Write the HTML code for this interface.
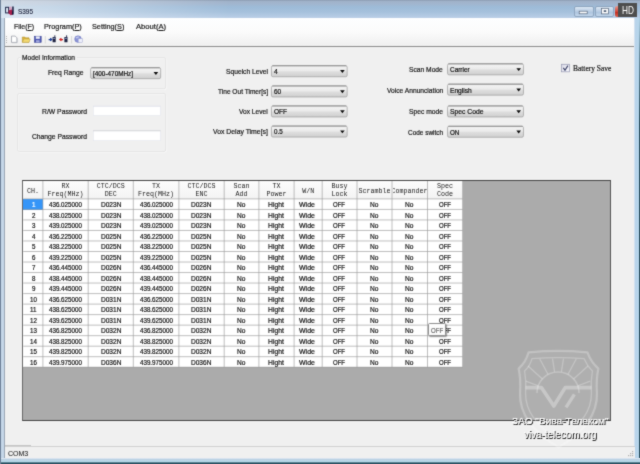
<!DOCTYPE html><html><head><meta charset="utf-8"><title>S395</title><style>
*{box-sizing:border-box;margin:0;padding:0}
html,body{width:640px;height:464px;overflow:hidden;background:#f0f0f0}
body{position:relative;transform:translateZ(0);will-change:transform;filter:url(#bl);font-family:"Liberation Sans",sans-serif;font-size:7px;color:#1a1a1a}
.a{position:absolute}
.t{position:absolute;white-space:nowrap;line-height:1;-webkit-text-stroke:0.2px currentColor}
.combo{position:absolute;height:12px;border:0.7px solid #a9a9a9;border-top-color:#8a8a8a;border-radius:1.6px;background:linear-gradient(#f3f3f3,#ebebeb 45%,#dddddd 55%,#cfcfcf)}
.arr{position:absolute;width:5px;height:3px;background:#0a0a0a;clip-path:polygon(0 0,100% 0,50% 100%)}
.inp{position:absolute;background:#fff;border:0.6px solid #e4e6ee}
.gb{position:absolute;border:0.7px solid #e1e1e1;border-radius:2px;box-shadow:0.6px 0.6px 0 #fbfbfb, inset 0.6px 0.6px 0 #fbfbfb}
.vl{position:absolute;width:0.8px;background:#c2c2c2}
.hl{position:absolute;height:0.8px;background:#c2c2c2}
</style></head><body>
<svg width="0" height="0" style="position:absolute"><filter id="bl" x="0" y="0" width="100%" height="100%" color-interpolation-filters="sRGB"><feConvolveMatrix order="3" kernelMatrix="0.025 0.085 0.025 0.085 0.56 0.085 0.025 0.085 0.025" edgeMode="duplicate" preserveAlpha="true"/></filter></svg>
<div class="a" style="left:0;top:0;width:640px;height:464px;background:#c5d6e8"></div>
<div class="a" style="left:0;top:0;width:640px;height:18px;background:linear-gradient(90deg,rgba(255,255,255,.5) 0,rgba(255,255,255,.42) 50px,rgba(255,255,255,0) 230px),linear-gradient(#8797ad 0,#a0b2c9 1.2px,#a1b6cf 4px,#9dbbd8 7px,#a6c1dc 12px,#b9cee6 17.5px,#c5d8ec 18px)"></div>
<div class="a" style="left:0;top:0;width:0.9px;height:464px;background:#6f8299"></div>
<div class="a" style="left:634px;top:18px;width:6px;height:446px;background:linear-gradient(90deg,#e3ecf6 0,#b9d3ea 1.2px,#b5d7ec 6px)"></div>
<div class="a" style="left:638.9px;top:14px;width:1.1px;height:450px;background:linear-gradient(rgba(45,80,96,0) 0,rgba(45,80,96,.55) 40px,rgba(45,80,96,1) 110px)"></div>
<div class="a" style="left:4.1px;top:18px;width:630px;height:440px;background:#f0f0f0;border-left:1.3px solid #9ba7b5"></div>
<div class="a" style="left:5.4px;top:18px;width:628.7px;height:29px;background:linear-gradient(#fdfeff 0,#fbfbfb 50%,#efefef 100%);border-bottom:1px solid #8e8e8e"></div>
<div class="t" style="left:18.00px;top:8.00px;font-size:7.6px;transform:scaleX(0.845);transform-origin:0 0;color:#1c2540;text-shadow:0 0 2px #fff">S395</div>
<svg class="a" style="left:5px;top:6px" width="10" height="10" viewBox="0 0 10 10"><rect x="0.6" y="1.3" width="3" height="5.6" fill="#e3e9f6" stroke="#1d2748" stroke-width="1"/><path d="M4 1 L6.4 0.4 L7 3.4 L4.6 4Z" fill="#d890b4" opacity="0.8"/><path d="M3.4 4.6 L6.6 3.4 L8 5 L8 8.4 L5.6 9.2 L3.6 7.2Z" fill="#a8204e"/><path d="M7.2 0.6 H8.7 V8.6 L6.8 8.8 L7.2 5Z" fill="#171a3c"/></svg>
<div class="a" style="left:574px;top:5.5px;width:19.5px;height:11px;border:0.7px solid #8fa6c0;border-radius:2px;background:linear-gradient(#dbe7f3,#b7cbe2 50%,#a9c1dc 51%,#c3d6ea)"></div>
<div class="a" style="left:594.5px;top:5.5px;width:19.5px;height:11px;border:0.7px solid #8fa6c0;border-radius:2px;background:linear-gradient(#dbe7f3,#b7cbe2 50%,#a9c1dc 51%,#c3d6ea)"></div>
<svg class="a" style="left:570px;top:0" width="50" height="18" viewBox="570 0 50 18"><rect x="579.2" y="11.2" width="8" height="2.6" fill="#fff" stroke="#55657c" stroke-width="0.7"/><rect x="601.6" y="8.3" width="6.8" height="5.6" fill="#fff" stroke="#55657c" stroke-width="0.7"/><rect x="603.7" y="10.2" width="2.6" height="1.8" fill="#55657c"/></svg>
<div class="a" style="left:614.5px;top:5.5px;width:6px;height:11px;background:linear-gradient(#e89a8f,#d3473a 50%,#c02a1c 51%,#d8604f);border-radius:2px 0 0 2px"></div>
<div class="a" style="left:617.5px;top:3px;width:19.5px;height:14px;background:#4d4d4d"></div>
<div class="t" style="left:622.00px;top:6.00px;font-size:10.4px;transform:scaleX(0.792);transform-origin:0 0;color:#fff;-webkit-text-stroke:0">HD</div>
<div class="t" style="left:13.70px;top:23.00px;font-size:7.6px;transform:scaleX(0.913);transform-origin:0 0;color:#1a1a1a">File(<u>F</u>)</div>
<div class="t" style="left:44.40px;top:23.00px;font-size:7.6px;transform:scaleX(0.960);transform-origin:0 0;color:#1a1a1a">Program(<u>P</u>)</div>
<div class="t" style="left:92.30px;top:23.00px;font-size:7.6px;transform:scaleX(0.956);transform-origin:0 0;color:#1a1a1a">Setting(<u>S</u>)</div>
<div class="t" style="left:135.90px;top:23.00px;font-size:7.6px;transform:scaleX(1.004);transform-origin:0 0;color:#1a1a1a">About(<u>A</u>)</div>
<div class="a" style="left:6.2px;top:35.5px;width:1px;height:8.5px;background:repeating-linear-gradient(#b5b5b5 0,#b5b5b5 1px,transparent 1px,transparent 2px)"></div>
<svg class="a" style="left:10px;top:34px" width="80" height="12" viewBox="0 0 80 12"><path d="M1.5 2.1 H5.2 L6.9 3.8 V8.4 H1.5Z" fill="#fff" stroke="#7d838e" stroke-width="0.6"/><path d="M7.3 4.2 V8.8 H2" stroke="#b9bcc4" stroke-width="0.5" fill="none"/><path d="M12.3 3 H14.8 L15.6 3.8 H19 V8.3 H12.3Z" fill="#dcb43c" stroke="#a88a2c" stroke-width="0.5"/><path d="M12.4 8.3 L13.8 5 H20.2 L19 8.3Z" fill="#f3da72" stroke="#b39632" stroke-width="0.4"/><rect x="24.4" y="2.2" width="6.8" height="6.2" fill="#4c56b2" stroke="#343c8c" stroke-width="0.5"/><rect x="25.8" y="2.4" width="4" height="2.4" fill="#eef0fa"/><rect x="26" y="6.2" width="3.6" height="2.2" fill="#a3aade"/><path d="M35.3 2 V9.4" stroke="#c6c6c6" stroke-width="0.6"/><path d="M38.6 5.6 H41.6 M40.2 4.3 L41.8 5.6 L40.2 6.9" stroke="#1c3e9a" stroke-width="1.1" fill="none"/><rect x="42.6" y="3" width="3.1" height="5.3" rx="0.4" fill="#1c2140"/><rect x="44.4" y="1.3" width="0.9" height="2" fill="#1c2140"/><rect x="43.2" y="3.8" width="1.9" height="1.2" fill="#7d86b4"/><path d="M50 5.6 H53 M51.4 4.3 L49.8 5.6 L51.4 6.9" stroke="#d42424" stroke-width="1.1" fill="none"/><rect x="54.4" y="3" width="3.1" height="5.3" rx="0.4" fill="#1c2140"/><rect x="56.2" y="1.3" width="0.9" height="2" fill="#1c2140"/><rect x="55" y="3.8" width="1.9" height="1.2" fill="#7d86b4"/><path d="M61.6 2 V9.4" stroke="#c6c6c6" stroke-width="0.6"/><circle cx="68" cy="5.1" r="3.3" fill="#8a93d6" stroke="#6670b8" stroke-width="0.5"/><path d="M65.4 3.6 Q67 2.2 69.4 2.6 Q68.4 4.4 66.6 4.6Z" fill="#c5cbf0"/><rect x="68.2" y="4.6" width="4.2" height="3.9" fill="#eceefa" stroke="#8f96c8" stroke-width="0.4"/></svg>
<svg width="0" height="0" style="position:absolute"><defs><linearGradient id="cbg" x1="0" y1="0" x2="0" y2="1"><stop offset="0" stop-color="#f4f4f4"/><stop offset="0.45" stop-color="#ebebeb"/><stop offset="0.55" stop-color="#dedede"/><stop offset="1" stop-color="#cfcfcf"/></linearGradient></defs></svg>
<svg class="a" style="left:15px;top:55px" width="153" height="37" viewBox="15 55 153 37"><rect x="18.40" y="58.30" width="147.90" height="31.20" rx="1.6" fill="none" stroke="#fcfcfc" stroke-width="0.7"/><rect x="17.70" y="57.60" width="147.90" height="31.20" rx="1.6" fill="none" stroke="#dedede" stroke-width="0.7"/></svg>
<div class="a" style="left:20.5px;top:55px;width:56px;height:6px;background:#f0f0f0"></div>
<div class="t" style="left:21.95px;top:55.00px;font-size:6.8px;transform:scaleX(0.975);transform-origin:0 0;">Model Information</div>
<div class="t" style="left:48.25px;top:70.00px;font-size:6.8px;transform:scaleX(0.990);transform-origin:0 0;">Freq Range</div>
<svg class="a" style="left:88px;top:65px" width="76" height="18" viewBox="88 65 76 18"><rect x="90.65" y="67.75" width="70.00" height="10.90" rx="1.5" fill="url(#cbg)" stroke="#a0a0a0" stroke-width="0.75"/><path d="M91.50 67.75 H159.80" stroke="#7e7e7e" stroke-width="0.75"/><path d="M153.55 72.10 h4.7 l-2.35 2.9z" fill="#0a0a0a"/></svg><div class="t" style="left:92.70px;top:71.00px;font-size:6.8px;transform:scaleX(0.939);transform-origin:0 0;color:#111">[400-470MHz]</div>
<svg class="a" style="left:15px;top:91px" width="153" height="64" viewBox="15 91 153 64"><rect x="18.40" y="94.20" width="147.90" height="58.00" rx="1.6" fill="none" stroke="#fcfcfc" stroke-width="0.7"/><rect x="17.70" y="93.50" width="147.90" height="58.00" rx="1.6" fill="none" stroke="#dedede" stroke-width="0.7"/></svg>
<div class="t" style="left:41.80px;top:109.00px;font-size:6.8px;transform:scaleX(1.001);transform-origin:0 0;">R/W Password</div>
<svg class="a" style="left:91px;top:103px" width="73" height="15" viewBox="91 103 73 15"><rect x="93.40" y="106.20" width="66.90" height="9.20" fill="#fff" stroke="#e4e6ee" stroke-width="0.6"/><path d="M93.10 106.20 H160.60" stroke="#dfe1ea" stroke-width="0.6"/></svg>
<div class="t" style="left:31.70px;top:134.00px;font-size:6.8px;transform:scaleX(0.992);transform-origin:0 0;">Change Password</div>
<svg class="a" style="left:91px;top:128px" width="73" height="16" viewBox="91 128 73 16"><rect x="93.40" y="130.80" width="66.90" height="9.90" fill="#fff" stroke="#e4e6ee" stroke-width="0.6"/><path d="M93.10 130.80 H160.60" stroke="#c4c4c8" stroke-width="0.6"/></svg>
<div class="t" style="left:225.80px;top:69.00px;font-size:6.8px;transform:scaleX(0.985);transform-origin:0 0;">Squelch Level</div>
<svg class="a" style="left:269px;top:63px" width="82" height="18" viewBox="269 63 82 18"><rect x="271.45" y="65.75" width="75.70" height="11.00" rx="1.5" fill="url(#cbg)" stroke="#a0a0a0" stroke-width="0.75"/><path d="M272.30 65.75 H346.30" stroke="#7e7e7e" stroke-width="0.75"/><path d="M340.05 70.10 h4.7 l-2.35 2.9z" fill="#0a0a0a"/></svg><div class="t" style="left:273.50px;top:69.00px;font-size:6.8px;transform:scaleX(0.978);transform-origin:0 0;color:#111">4</div>
<div class="t" style="left:217.70px;top:89.00px;font-size:6.8px;transform:scaleX(0.967);transform-origin:0 0;">Tine Out Timer[s]</div>
<svg class="a" style="left:269px;top:83px" width="82" height="18" viewBox="269 83 82 18"><rect x="271.45" y="85.95" width="75.70" height="11.00" rx="1.5" fill="url(#cbg)" stroke="#a0a0a0" stroke-width="0.75"/><path d="M272.30 85.95 H346.30" stroke="#7e7e7e" stroke-width="0.75"/><path d="M340.05 90.30 h4.7 l-2.35 2.9z" fill="#0a0a0a"/></svg><div class="t" style="left:273.50px;top:89.00px;font-size:6.8px;transform:scaleX(0.952);transform-origin:0 0;color:#111">60</div>
<div class="t" style="left:239.20px;top:109.00px;font-size:6.8px;transform:scaleX(0.973);transform-origin:0 0;">Vox Level</div>
<svg class="a" style="left:269px;top:103px" width="82" height="18" viewBox="269 103 82 18"><rect x="271.45" y="105.95" width="75.70" height="11.00" rx="1.5" fill="url(#cbg)" stroke="#a0a0a0" stroke-width="0.75"/><path d="M272.30 105.95 H346.30" stroke="#7e7e7e" stroke-width="0.75"/><path d="M340.05 110.30 h4.7 l-2.35 2.9z" fill="#0a0a0a"/></svg><div class="t" style="left:273.50px;top:109.00px;font-size:6.8px;transform:scaleX(0.956);transform-origin:0 0;color:#111">OFF</div>
<div class="t" style="left:213.00px;top:129.00px;font-size:6.8px;transform:scaleX(1.009);transform-origin:0 0;">Vox Delay Time[s]</div>
<svg class="a" style="left:269px;top:123px" width="82" height="18" viewBox="269 123 82 18"><rect x="271.45" y="126.05" width="75.70" height="11.00" rx="1.5" fill="url(#cbg)" stroke="#a0a0a0" stroke-width="0.75"/><path d="M272.30 126.05 H346.30" stroke="#7e7e7e" stroke-width="0.75"/><path d="M340.05 130.40 h4.7 l-2.35 2.9z" fill="#0a0a0a"/></svg><div class="t" style="left:273.50px;top:129.00px;font-size:6.8px;transform:scaleX(0.920);transform-origin:0 0;color:#111">0.5</div>
<div class="t" style="left:409.10px;top:67.00px;font-size:6.8px;transform:scaleX(0.983);transform-origin:0 0;">Scan Mode</div>
<svg class="a" style="left:445px;top:61px" width="82" height="18" viewBox="445 61 82 18"><rect x="447.55" y="63.85" width="75.90" height="11.00" rx="1.5" fill="url(#cbg)" stroke="#a0a0a0" stroke-width="0.75"/><path d="M448.40 63.85 H522.60" stroke="#7e7e7e" stroke-width="0.75"/><path d="M516.35 68.20 h4.7 l-2.35 2.9z" fill="#0a0a0a"/></svg><div class="t" style="left:449.60px;top:67.00px;font-size:6.8px;transform:scaleX(0.943);transform-origin:0 0;color:#111">Carrier</div>
<div class="t" style="left:386.60px;top:88.00px;font-size:6.8px;transform:scaleX(0.980);transform-origin:0 0;">Voice Annunciation</div>
<svg class="a" style="left:445px;top:81px" width="82" height="18" viewBox="445 81 82 18"><rect x="447.55" y="84.15" width="75.90" height="11.00" rx="1.5" fill="url(#cbg)" stroke="#a0a0a0" stroke-width="0.75"/><path d="M448.40 84.15 H522.60" stroke="#7e7e7e" stroke-width="0.75"/><path d="M516.35 88.50 h4.7 l-2.35 2.9z" fill="#0a0a0a"/></svg><div class="t" style="left:449.60px;top:88.00px;font-size:6.8px;transform:scaleX(0.977);transform-origin:0 0;color:#111">English</div>
<div class="t" style="left:408.80px;top:109.00px;font-size:6.8px;transform:scaleX(0.991);transform-origin:0 0;">Spec mode</div>
<svg class="a" style="left:445px;top:103px" width="82" height="18" viewBox="445 103 82 18"><rect x="447.55" y="105.95" width="75.90" height="11.00" rx="1.5" fill="url(#cbg)" stroke="#a0a0a0" stroke-width="0.75"/><path d="M448.40 105.95 H522.60" stroke="#7e7e7e" stroke-width="0.75"/><path d="M516.35 110.30 h4.7 l-2.35 2.9z" fill="#0a0a0a"/></svg><div class="t" style="left:449.60px;top:109.00px;font-size:6.8px;transform:scaleX(0.996);transform-origin:0 0;color:#111">Spec Code</div>
<div class="t" style="left:407.80px;top:130.00px;font-size:6.8px;transform:scaleX(0.948);transform-origin:0 0;">Code switch</div>
<svg class="a" style="left:445px;top:123px" width="82" height="18" viewBox="445 123 82 18"><rect x="447.55" y="126.25" width="75.90" height="11.00" rx="1.5" fill="url(#cbg)" stroke="#a0a0a0" stroke-width="0.75"/><path d="M448.40 126.25 H522.60" stroke="#7e7e7e" stroke-width="0.75"/><path d="M516.35 130.60 h4.7 l-2.35 2.9z" fill="#0a0a0a"/></svg><div class="t" style="left:449.60px;top:130.00px;font-size:6.8px;transform:scaleX(0.922);transform-origin:0 0;color:#111">ON</div>
<svg class="a" style="left:558px;top:61px" width="16" height="16" viewBox="558 61 16 16"><defs><linearGradient id="cg" x1="0" y1="0" x2="1" y2="1"><stop offset="0" stop-color="#d9d9e6"/><stop offset="1" stop-color="#fbfbff"/></linearGradient></defs><rect x="561.6" y="64.3" width="7.8" height="7.5" fill="url(#cg)" stroke="#9a9db6" stroke-width="0.75"/><path d="M563.3 67.9 L565 70.2 L567.9 65.6" stroke="#3d4468" stroke-width="1.15" fill="none"/></svg>
<div class="t" style="left:573.00px;top:65.00px;font-size:7.5px;font-family:'Liberation Serif',serif;transform:scaleX(0.993);transform-origin:0 0;">Battery Save</div>
<div class="a" style="left:22.0px;top:179.8px;width:589.1px;height:241.0px;background:#ababab;border:1.15px solid #454545;border-left-color:#686868;border-right-color:#555"></div>
<div class="a" style="left:23.3px;top:181px;width:439.5px;height:186.32px;background:#fff"></div>
<div class="a" style="left:23.3px;top:181px;width:439.5px;height:18.0px;background:linear-gradient(#fcfcfc,#f3f3f3)"></div>
<div class="a" style="left:23.3px;top:199.0px;width:19.900000000000002px;height:10.52px;background:#3595f8"></div>
<svg class="a" style="left:0;top:0" width="640" height="464" viewBox="0 0 640 464"><g stroke="#9c9c9c" stroke-width="0.66" fill="none"><path d="M42.90 181.00 V367.32 M88.20 181.00 V367.32 M133.30 181.00 V367.32 M178.90 181.00 V367.32 M224.20 181.00 V367.32 M258.90 181.00 V367.32 M294.10 181.00 V367.32 M322.20 181.00 V367.32 M357.00 181.00 V367.32 M392.00 181.00 V367.32 M427.50 181.00 V367.32 M462.50 181.00 V367.32 M23.30 198.90 H462.80 M23.30 209.42 H462.80 M23.30 219.94 H462.80 M23.30 230.46 H462.80 M23.30 240.98 H462.80 M23.30 251.50 H462.80 M23.30 262.02 H462.80 M23.30 272.54 H462.80 M23.30 283.06 H462.80 M23.30 293.58 H462.80 M23.30 304.10 H462.80 M23.30 314.62 H462.80 M23.30 325.14 H462.80 M23.30 335.66 H462.80 M23.30 346.18 H462.80 M23.30 356.70 H462.80 M23.30 367.22 H462.80"/></g></svg>
<div class="t" style="left:26.95px;top:188.00px;font-size:6.666666666666667px;font-family:'Liberation Mono',monospace;transform:scaleX(1.000);transform-origin:0 0;color:#202020;-webkit-text-stroke:0">CH.</div>
<div class="t" style="left:61.55px;top:183.00px;font-size:6.666666666666667px;font-family:'Liberation Mono',monospace;transform:scaleX(1.000);transform-origin:0 0;color:#202020;-webkit-text-stroke:0">RX</div>
<div class="t" style="left:47.55px;top:191.00px;font-size:6.666666666666667px;font-family:'Liberation Mono',monospace;transform:scaleX(1.000);transform-origin:0 0;color:#202020;-webkit-text-stroke:0">Freq(MHz)</div>
<div class="t" style="left:96.75px;top:183.00px;font-size:6.666666666666667px;font-family:'Liberation Mono',monospace;transform:scaleX(1.000);transform-origin:0 0;color:#202020;-webkit-text-stroke:0">CTC/DCS</div>
<div class="t" style="left:104.75px;top:191.00px;font-size:6.666666666666667px;font-family:'Liberation Mono',monospace;transform:scaleX(1.000);transform-origin:0 0;color:#202020;-webkit-text-stroke:0">DEC</div>
<div class="t" style="left:152.10px;top:183.00px;font-size:6.666666666666667px;font-family:'Liberation Mono',monospace;transform:scaleX(1.000);transform-origin:0 0;color:#202020;-webkit-text-stroke:0">TX</div>
<div class="t" style="left:138.10px;top:191.00px;font-size:6.666666666666667px;font-family:'Liberation Mono',monospace;transform:scaleX(1.000);transform-origin:0 0;color:#202020;-webkit-text-stroke:0">Freq(MHz)</div>
<div class="t" style="left:187.55px;top:183.00px;font-size:6.666666666666667px;font-family:'Liberation Mono',monospace;transform:scaleX(1.000);transform-origin:0 0;color:#202020;-webkit-text-stroke:0">CTC/DCS</div>
<div class="t" style="left:195.55px;top:191.00px;font-size:6.666666666666667px;font-family:'Liberation Mono',monospace;transform:scaleX(1.000);transform-origin:0 0;color:#202020;-webkit-text-stroke:0">ENC</div>
<div class="t" style="left:233.55px;top:183.00px;font-size:6.666666666666667px;font-family:'Liberation Mono',monospace;transform:scaleX(1.000);transform-origin:0 0;color:#202020;-webkit-text-stroke:0">Scan</div>
<div class="t" style="left:235.55px;top:191.00px;font-size:6.666666666666667px;font-family:'Liberation Mono',monospace;transform:scaleX(1.000);transform-origin:0 0;color:#202020;-webkit-text-stroke:0">Add</div>
<div class="t" style="left:272.50px;top:183.00px;font-size:6.666666666666667px;font-family:'Liberation Mono',monospace;transform:scaleX(1.000);transform-origin:0 0;color:#202020;-webkit-text-stroke:0">TX</div>
<div class="t" style="left:266.50px;top:191.00px;font-size:6.666666666666667px;font-family:'Liberation Mono',monospace;transform:scaleX(1.000);transform-origin:0 0;color:#202020;-webkit-text-stroke:0">Power</div>
<div class="t" style="left:302.15px;top:188.00px;font-size:6.666666666666667px;font-family:'Liberation Mono',monospace;transform:scaleX(1.000);transform-origin:0 0;color:#202020;-webkit-text-stroke:0">W/N</div>
<div class="t" style="left:331.60px;top:183.00px;font-size:6.666666666666667px;font-family:'Liberation Mono',monospace;transform:scaleX(1.000);transform-origin:0 0;color:#202020;-webkit-text-stroke:0">Busy</div>
<div class="t" style="left:331.60px;top:191.00px;font-size:6.666666666666667px;font-family:'Liberation Mono',monospace;transform:scaleX(1.000);transform-origin:0 0;color:#202020;-webkit-text-stroke:0">Lock</div>
<div class="t" style="left:358.50px;top:188.00px;font-size:6.666666666666667px;font-family:'Liberation Mono',monospace;transform:scaleX(1.000);transform-origin:0 0;color:#202020;-webkit-text-stroke:0">Scramble</div>
<div class="a" style="left:392.8px;top:181px;width:34.5px;height:17.0px;overflow:hidden">
<div class="t" style="left:-1.30px;top:6.99px;font-size:6.667px;font-family:'Liberation Mono',monospace;color:#202020;-webkit-text-stroke:0">Compander</div></div>
<div class="t" style="left:437.00px;top:183.00px;font-size:6.666666666666667px;font-family:'Liberation Mono',monospace;transform:scaleX(1.000);transform-origin:0 0;color:#202020;-webkit-text-stroke:0">Spec</div>
<div class="t" style="left:437.00px;top:191.00px;font-size:6.666666666666667px;font-family:'Liberation Mono',monospace;transform:scaleX(1.000);transform-origin:0 0;color:#202020;-webkit-text-stroke:0">Code</div>
<div class="t" style="left:31.53px;top:202.00px;font-size:6.6px;transform:scaleX(0.939);transform-origin:0 0;color:#fff">1</div>
<div class="t" style="left:49.10px;top:202.00px;font-size:6.6px;transform:scaleX(0.943);transform-origin:0 0;color:#141414">436.025000</div>
<div class="t" style="left:100.55px;top:202.00px;font-size:6.6px;transform:scaleX(0.993);transform-origin:0 0;color:#141414">D023N</div>
<div class="t" style="left:139.65px;top:202.00px;font-size:6.6px;transform:scaleX(0.943);transform-origin:0 0;color:#141414">436.025000</div>
<div class="t" style="left:191.35px;top:202.00px;font-size:6.6px;transform:scaleX(0.993);transform-origin:0 0;color:#141414">D023N</div>
<div class="t" style="left:236.95px;top:202.00px;font-size:6.6px;transform:scaleX(0.996);transform-origin:0 0;color:#141414">No</div>
<div class="t" style="left:268.40px;top:202.00px;font-size:6.6px;transform:scaleX(1.025);transform-origin:0 0;color:#141414">Hight</div>
<div class="t" style="left:299.20px;top:202.00px;font-size:6.6px;transform:scaleX(1.057);transform-origin:0 0;color:#141414">Wide</div>
<div class="t" style="left:332.90px;top:202.00px;font-size:6.6px;transform:scaleX(0.909);transform-origin:0 0;color:#141414">OFF</div>
<div class="t" style="left:370.00px;top:202.00px;font-size:6.6px;transform:scaleX(0.996);transform-origin:0 0;color:#141414">No</div>
<div class="t" style="left:405.25px;top:202.00px;font-size:6.6px;transform:scaleX(0.996);transform-origin:0 0;color:#141414">No</div>
<div class="t" style="left:438.70px;top:202.00px;font-size:6.6px;transform:scaleX(0.909);transform-origin:0 0;color:#141414">OFF</div>
<div class="t" style="left:31.53px;top:213.00px;font-size:6.6px;transform:scaleX(0.939);transform-origin:0 0;color:#141414">2</div>
<div class="t" style="left:49.10px;top:213.00px;font-size:6.6px;transform:scaleX(0.943);transform-origin:0 0;color:#141414">438.025000</div>
<div class="t" style="left:100.55px;top:213.00px;font-size:6.6px;transform:scaleX(0.993);transform-origin:0 0;color:#141414">D023N</div>
<div class="t" style="left:139.65px;top:213.00px;font-size:6.6px;transform:scaleX(0.943);transform-origin:0 0;color:#141414">438.025000</div>
<div class="t" style="left:191.35px;top:213.00px;font-size:6.6px;transform:scaleX(0.993);transform-origin:0 0;color:#141414">D023N</div>
<div class="t" style="left:236.95px;top:213.00px;font-size:6.6px;transform:scaleX(0.996);transform-origin:0 0;color:#141414">No</div>
<div class="t" style="left:268.40px;top:213.00px;font-size:6.6px;transform:scaleX(1.025);transform-origin:0 0;color:#141414">Hight</div>
<div class="t" style="left:299.20px;top:213.00px;font-size:6.6px;transform:scaleX(1.057);transform-origin:0 0;color:#141414">Wide</div>
<div class="t" style="left:332.90px;top:213.00px;font-size:6.6px;transform:scaleX(0.909);transform-origin:0 0;color:#141414">OFF</div>
<div class="t" style="left:370.00px;top:213.00px;font-size:6.6px;transform:scaleX(0.996);transform-origin:0 0;color:#141414">No</div>
<div class="t" style="left:405.25px;top:213.00px;font-size:6.6px;transform:scaleX(0.996);transform-origin:0 0;color:#141414">No</div>
<div class="t" style="left:438.70px;top:213.00px;font-size:6.6px;transform:scaleX(0.909);transform-origin:0 0;color:#141414">OFF</div>
<div class="t" style="left:31.53px;top:223.00px;font-size:6.6px;transform:scaleX(0.939);transform-origin:0 0;color:#141414">3</div>
<div class="t" style="left:49.10px;top:223.00px;font-size:6.6px;transform:scaleX(0.943);transform-origin:0 0;color:#141414">439.025000</div>
<div class="t" style="left:100.55px;top:223.00px;font-size:6.6px;transform:scaleX(0.993);transform-origin:0 0;color:#141414">D023N</div>
<div class="t" style="left:139.65px;top:223.00px;font-size:6.6px;transform:scaleX(0.943);transform-origin:0 0;color:#141414">439.025000</div>
<div class="t" style="left:191.35px;top:223.00px;font-size:6.6px;transform:scaleX(0.993);transform-origin:0 0;color:#141414">D023N</div>
<div class="t" style="left:236.95px;top:223.00px;font-size:6.6px;transform:scaleX(0.996);transform-origin:0 0;color:#141414">No</div>
<div class="t" style="left:268.40px;top:223.00px;font-size:6.6px;transform:scaleX(1.025);transform-origin:0 0;color:#141414">Hight</div>
<div class="t" style="left:299.20px;top:223.00px;font-size:6.6px;transform:scaleX(1.057);transform-origin:0 0;color:#141414">Wide</div>
<div class="t" style="left:332.90px;top:223.00px;font-size:6.6px;transform:scaleX(0.909);transform-origin:0 0;color:#141414">OFF</div>
<div class="t" style="left:370.00px;top:223.00px;font-size:6.6px;transform:scaleX(0.996);transform-origin:0 0;color:#141414">No</div>
<div class="t" style="left:405.25px;top:223.00px;font-size:6.6px;transform:scaleX(0.996);transform-origin:0 0;color:#141414">No</div>
<div class="t" style="left:438.70px;top:223.00px;font-size:6.6px;transform:scaleX(0.909);transform-origin:0 0;color:#141414">OFF</div>
<div class="t" style="left:31.53px;top:234.00px;font-size:6.6px;transform:scaleX(0.939);transform-origin:0 0;color:#141414">4</div>
<div class="t" style="left:49.10px;top:234.00px;font-size:6.6px;transform:scaleX(0.943);transform-origin:0 0;color:#141414">436.225000</div>
<div class="t" style="left:100.55px;top:234.00px;font-size:6.6px;transform:scaleX(0.993);transform-origin:0 0;color:#141414">D025N</div>
<div class="t" style="left:139.65px;top:234.00px;font-size:6.6px;transform:scaleX(0.943);transform-origin:0 0;color:#141414">436.225000</div>
<div class="t" style="left:191.35px;top:234.00px;font-size:6.6px;transform:scaleX(0.993);transform-origin:0 0;color:#141414">D025N</div>
<div class="t" style="left:236.95px;top:234.00px;font-size:6.6px;transform:scaleX(0.996);transform-origin:0 0;color:#141414">No</div>
<div class="t" style="left:268.40px;top:234.00px;font-size:6.6px;transform:scaleX(1.025);transform-origin:0 0;color:#141414">Hight</div>
<div class="t" style="left:299.20px;top:234.00px;font-size:6.6px;transform:scaleX(1.057);transform-origin:0 0;color:#141414">Wide</div>
<div class="t" style="left:332.90px;top:234.00px;font-size:6.6px;transform:scaleX(0.909);transform-origin:0 0;color:#141414">OFF</div>
<div class="t" style="left:370.00px;top:234.00px;font-size:6.6px;transform:scaleX(0.996);transform-origin:0 0;color:#141414">No</div>
<div class="t" style="left:405.25px;top:234.00px;font-size:6.6px;transform:scaleX(0.996);transform-origin:0 0;color:#141414">No</div>
<div class="t" style="left:438.70px;top:234.00px;font-size:6.6px;transform:scaleX(0.909);transform-origin:0 0;color:#141414">OFF</div>
<div class="t" style="left:31.53px;top:244.00px;font-size:6.6px;transform:scaleX(0.939);transform-origin:0 0;color:#141414">5</div>
<div class="t" style="left:49.10px;top:244.00px;font-size:6.6px;transform:scaleX(0.943);transform-origin:0 0;color:#141414">438.225000</div>
<div class="t" style="left:100.55px;top:244.00px;font-size:6.6px;transform:scaleX(0.993);transform-origin:0 0;color:#141414">D025N</div>
<div class="t" style="left:139.65px;top:244.00px;font-size:6.6px;transform:scaleX(0.943);transform-origin:0 0;color:#141414">438.225000</div>
<div class="t" style="left:191.35px;top:244.00px;font-size:6.6px;transform:scaleX(0.993);transform-origin:0 0;color:#141414">D025N</div>
<div class="t" style="left:236.95px;top:244.00px;font-size:6.6px;transform:scaleX(0.996);transform-origin:0 0;color:#141414">No</div>
<div class="t" style="left:268.40px;top:244.00px;font-size:6.6px;transform:scaleX(1.025);transform-origin:0 0;color:#141414">Hight</div>
<div class="t" style="left:299.20px;top:244.00px;font-size:6.6px;transform:scaleX(1.057);transform-origin:0 0;color:#141414">Wide</div>
<div class="t" style="left:332.90px;top:244.00px;font-size:6.6px;transform:scaleX(0.909);transform-origin:0 0;color:#141414">OFF</div>
<div class="t" style="left:370.00px;top:244.00px;font-size:6.6px;transform:scaleX(0.996);transform-origin:0 0;color:#141414">No</div>
<div class="t" style="left:405.25px;top:244.00px;font-size:6.6px;transform:scaleX(0.996);transform-origin:0 0;color:#141414">No</div>
<div class="t" style="left:438.70px;top:244.00px;font-size:6.6px;transform:scaleX(0.909);transform-origin:0 0;color:#141414">OFF</div>
<div class="t" style="left:31.53px;top:255.00px;font-size:6.6px;transform:scaleX(0.939);transform-origin:0 0;color:#141414">6</div>
<div class="t" style="left:49.10px;top:255.00px;font-size:6.6px;transform:scaleX(0.943);transform-origin:0 0;color:#141414">439.225000</div>
<div class="t" style="left:100.55px;top:255.00px;font-size:6.6px;transform:scaleX(0.993);transform-origin:0 0;color:#141414">D025N</div>
<div class="t" style="left:139.65px;top:255.00px;font-size:6.6px;transform:scaleX(0.943);transform-origin:0 0;color:#141414">439.225000</div>
<div class="t" style="left:191.35px;top:255.00px;font-size:6.6px;transform:scaleX(0.993);transform-origin:0 0;color:#141414">D025N</div>
<div class="t" style="left:236.95px;top:255.00px;font-size:6.6px;transform:scaleX(0.996);transform-origin:0 0;color:#141414">No</div>
<div class="t" style="left:268.40px;top:255.00px;font-size:6.6px;transform:scaleX(1.025);transform-origin:0 0;color:#141414">Hight</div>
<div class="t" style="left:299.20px;top:255.00px;font-size:6.6px;transform:scaleX(1.057);transform-origin:0 0;color:#141414">Wide</div>
<div class="t" style="left:332.90px;top:255.00px;font-size:6.6px;transform:scaleX(0.909);transform-origin:0 0;color:#141414">OFF</div>
<div class="t" style="left:370.00px;top:255.00px;font-size:6.6px;transform:scaleX(0.996);transform-origin:0 0;color:#141414">No</div>
<div class="t" style="left:405.25px;top:255.00px;font-size:6.6px;transform:scaleX(0.996);transform-origin:0 0;color:#141414">No</div>
<div class="t" style="left:438.70px;top:255.00px;font-size:6.6px;transform:scaleX(0.909);transform-origin:0 0;color:#141414">OFF</div>
<div class="t" style="left:31.53px;top:265.00px;font-size:6.6px;transform:scaleX(0.939);transform-origin:0 0;color:#141414">7</div>
<div class="t" style="left:49.10px;top:265.00px;font-size:6.6px;transform:scaleX(0.943);transform-origin:0 0;color:#141414">436.445000</div>
<div class="t" style="left:100.55px;top:265.00px;font-size:6.6px;transform:scaleX(0.993);transform-origin:0 0;color:#141414">D026N</div>
<div class="t" style="left:139.65px;top:265.00px;font-size:6.6px;transform:scaleX(0.943);transform-origin:0 0;color:#141414">436.445000</div>
<div class="t" style="left:191.35px;top:265.00px;font-size:6.6px;transform:scaleX(0.993);transform-origin:0 0;color:#141414">D026N</div>
<div class="t" style="left:236.95px;top:265.00px;font-size:6.6px;transform:scaleX(0.996);transform-origin:0 0;color:#141414">No</div>
<div class="t" style="left:268.40px;top:265.00px;font-size:6.6px;transform:scaleX(1.025);transform-origin:0 0;color:#141414">Hight</div>
<div class="t" style="left:299.20px;top:265.00px;font-size:6.6px;transform:scaleX(1.057);transform-origin:0 0;color:#141414">Wide</div>
<div class="t" style="left:332.90px;top:265.00px;font-size:6.6px;transform:scaleX(0.909);transform-origin:0 0;color:#141414">OFF</div>
<div class="t" style="left:370.00px;top:265.00px;font-size:6.6px;transform:scaleX(0.996);transform-origin:0 0;color:#141414">No</div>
<div class="t" style="left:405.25px;top:265.00px;font-size:6.6px;transform:scaleX(0.996);transform-origin:0 0;color:#141414">No</div>
<div class="t" style="left:438.70px;top:265.00px;font-size:6.6px;transform:scaleX(0.909);transform-origin:0 0;color:#141414">OFF</div>
<div class="t" style="left:31.53px;top:276.00px;font-size:6.6px;transform:scaleX(0.939);transform-origin:0 0;color:#141414">8</div>
<div class="t" style="left:49.10px;top:276.00px;font-size:6.6px;transform:scaleX(0.943);transform-origin:0 0;color:#141414">438.445000</div>
<div class="t" style="left:100.55px;top:276.00px;font-size:6.6px;transform:scaleX(0.993);transform-origin:0 0;color:#141414">D026N</div>
<div class="t" style="left:139.65px;top:276.00px;font-size:6.6px;transform:scaleX(0.943);transform-origin:0 0;color:#141414">438.445000</div>
<div class="t" style="left:191.35px;top:276.00px;font-size:6.6px;transform:scaleX(0.993);transform-origin:0 0;color:#141414">D026N</div>
<div class="t" style="left:236.95px;top:276.00px;font-size:6.6px;transform:scaleX(0.996);transform-origin:0 0;color:#141414">No</div>
<div class="t" style="left:268.40px;top:276.00px;font-size:6.6px;transform:scaleX(1.025);transform-origin:0 0;color:#141414">Hight</div>
<div class="t" style="left:299.20px;top:276.00px;font-size:6.6px;transform:scaleX(1.057);transform-origin:0 0;color:#141414">Wide</div>
<div class="t" style="left:332.90px;top:276.00px;font-size:6.6px;transform:scaleX(0.909);transform-origin:0 0;color:#141414">OFF</div>
<div class="t" style="left:370.00px;top:276.00px;font-size:6.6px;transform:scaleX(0.996);transform-origin:0 0;color:#141414">No</div>
<div class="t" style="left:405.25px;top:276.00px;font-size:6.6px;transform:scaleX(0.996);transform-origin:0 0;color:#141414">No</div>
<div class="t" style="left:438.70px;top:276.00px;font-size:6.6px;transform:scaleX(0.909);transform-origin:0 0;color:#141414">OFF</div>
<div class="t" style="left:31.53px;top:286.00px;font-size:6.6px;transform:scaleX(0.939);transform-origin:0 0;color:#141414">9</div>
<div class="t" style="left:49.10px;top:286.00px;font-size:6.6px;transform:scaleX(0.943);transform-origin:0 0;color:#141414">439.445000</div>
<div class="t" style="left:100.55px;top:286.00px;font-size:6.6px;transform:scaleX(0.993);transform-origin:0 0;color:#141414">D026N</div>
<div class="t" style="left:139.65px;top:286.00px;font-size:6.6px;transform:scaleX(0.943);transform-origin:0 0;color:#141414">439.445000</div>
<div class="t" style="left:191.35px;top:286.00px;font-size:6.6px;transform:scaleX(0.993);transform-origin:0 0;color:#141414">D026N</div>
<div class="t" style="left:236.95px;top:286.00px;font-size:6.6px;transform:scaleX(0.996);transform-origin:0 0;color:#141414">No</div>
<div class="t" style="left:268.40px;top:286.00px;font-size:6.6px;transform:scaleX(1.025);transform-origin:0 0;color:#141414">Hight</div>
<div class="t" style="left:299.20px;top:286.00px;font-size:6.6px;transform:scaleX(1.057);transform-origin:0 0;color:#141414">Wide</div>
<div class="t" style="left:332.90px;top:286.00px;font-size:6.6px;transform:scaleX(0.909);transform-origin:0 0;color:#141414">OFF</div>
<div class="t" style="left:370.00px;top:286.00px;font-size:6.6px;transform:scaleX(0.996);transform-origin:0 0;color:#141414">No</div>
<div class="t" style="left:405.25px;top:286.00px;font-size:6.6px;transform:scaleX(0.996);transform-origin:0 0;color:#141414">No</div>
<div class="t" style="left:438.70px;top:286.00px;font-size:6.6px;transform:scaleX(0.909);transform-origin:0 0;color:#141414">OFF</div>
<div class="t" style="left:29.80px;top:297.00px;font-size:6.6px;transform:scaleX(0.939);transform-origin:0 0;color:#141414">10</div>
<div class="t" style="left:49.10px;top:297.00px;font-size:6.6px;transform:scaleX(0.943);transform-origin:0 0;color:#141414">436.625000</div>
<div class="t" style="left:100.55px;top:297.00px;font-size:6.6px;transform:scaleX(0.993);transform-origin:0 0;color:#141414">D031N</div>
<div class="t" style="left:139.65px;top:297.00px;font-size:6.6px;transform:scaleX(0.943);transform-origin:0 0;color:#141414">436.625000</div>
<div class="t" style="left:191.35px;top:297.00px;font-size:6.6px;transform:scaleX(0.993);transform-origin:0 0;color:#141414">D031N</div>
<div class="t" style="left:236.95px;top:297.00px;font-size:6.6px;transform:scaleX(0.996);transform-origin:0 0;color:#141414">No</div>
<div class="t" style="left:268.40px;top:297.00px;font-size:6.6px;transform:scaleX(1.025);transform-origin:0 0;color:#141414">Hight</div>
<div class="t" style="left:299.20px;top:297.00px;font-size:6.6px;transform:scaleX(1.057);transform-origin:0 0;color:#141414">Wide</div>
<div class="t" style="left:332.90px;top:297.00px;font-size:6.6px;transform:scaleX(0.909);transform-origin:0 0;color:#141414">OFF</div>
<div class="t" style="left:370.00px;top:297.00px;font-size:6.6px;transform:scaleX(0.996);transform-origin:0 0;color:#141414">No</div>
<div class="t" style="left:405.25px;top:297.00px;font-size:6.6px;transform:scaleX(0.996);transform-origin:0 0;color:#141414">No</div>
<div class="t" style="left:438.70px;top:297.00px;font-size:6.6px;transform:scaleX(0.909);transform-origin:0 0;color:#141414">OFF</div>
<div class="t" style="left:30.03px;top:307.00px;font-size:6.6px;transform:scaleX(0.939);transform-origin:0 0;color:#141414">11</div>
<div class="t" style="left:49.10px;top:307.00px;font-size:6.6px;transform:scaleX(0.943);transform-origin:0 0;color:#141414">438.625000</div>
<div class="t" style="left:100.55px;top:307.00px;font-size:6.6px;transform:scaleX(0.993);transform-origin:0 0;color:#141414">D031N</div>
<div class="t" style="left:139.65px;top:307.00px;font-size:6.6px;transform:scaleX(0.943);transform-origin:0 0;color:#141414">438.625000</div>
<div class="t" style="left:191.35px;top:307.00px;font-size:6.6px;transform:scaleX(0.993);transform-origin:0 0;color:#141414">D031N</div>
<div class="t" style="left:236.95px;top:307.00px;font-size:6.6px;transform:scaleX(0.996);transform-origin:0 0;color:#141414">No</div>
<div class="t" style="left:268.40px;top:307.00px;font-size:6.6px;transform:scaleX(1.025);transform-origin:0 0;color:#141414">Hight</div>
<div class="t" style="left:299.20px;top:307.00px;font-size:6.6px;transform:scaleX(1.057);transform-origin:0 0;color:#141414">Wide</div>
<div class="t" style="left:332.90px;top:307.00px;font-size:6.6px;transform:scaleX(0.909);transform-origin:0 0;color:#141414">OFF</div>
<div class="t" style="left:370.00px;top:307.00px;font-size:6.6px;transform:scaleX(0.996);transform-origin:0 0;color:#141414">No</div>
<div class="t" style="left:405.25px;top:307.00px;font-size:6.6px;transform:scaleX(0.996);transform-origin:0 0;color:#141414">No</div>
<div class="t" style="left:438.70px;top:307.00px;font-size:6.6px;transform:scaleX(0.909);transform-origin:0 0;color:#141414">OFF</div>
<div class="t" style="left:29.80px;top:318.00px;font-size:6.6px;transform:scaleX(0.939);transform-origin:0 0;color:#141414">12</div>
<div class="t" style="left:49.10px;top:318.00px;font-size:6.6px;transform:scaleX(0.943);transform-origin:0 0;color:#141414">439.625000</div>
<div class="t" style="left:100.55px;top:318.00px;font-size:6.6px;transform:scaleX(0.993);transform-origin:0 0;color:#141414">D031N</div>
<div class="t" style="left:139.65px;top:318.00px;font-size:6.6px;transform:scaleX(0.943);transform-origin:0 0;color:#141414">439.625000</div>
<div class="t" style="left:191.35px;top:318.00px;font-size:6.6px;transform:scaleX(0.993);transform-origin:0 0;color:#141414">D031N</div>
<div class="t" style="left:236.95px;top:318.00px;font-size:6.6px;transform:scaleX(0.996);transform-origin:0 0;color:#141414">No</div>
<div class="t" style="left:268.40px;top:318.00px;font-size:6.6px;transform:scaleX(1.025);transform-origin:0 0;color:#141414">Hight</div>
<div class="t" style="left:299.20px;top:318.00px;font-size:6.6px;transform:scaleX(1.057);transform-origin:0 0;color:#141414">Wide</div>
<div class="t" style="left:332.90px;top:318.00px;font-size:6.6px;transform:scaleX(0.909);transform-origin:0 0;color:#141414">OFF</div>
<div class="t" style="left:370.00px;top:318.00px;font-size:6.6px;transform:scaleX(0.996);transform-origin:0 0;color:#141414">No</div>
<div class="t" style="left:405.25px;top:318.00px;font-size:6.6px;transform:scaleX(0.996);transform-origin:0 0;color:#141414">No</div>
<div class="t" style="left:438.70px;top:318.00px;font-size:6.6px;transform:scaleX(0.909);transform-origin:0 0;color:#141414">OFF</div>
<div class="t" style="left:29.80px;top:328.00px;font-size:6.6px;transform:scaleX(0.939);transform-origin:0 0;color:#141414">13</div>
<div class="t" style="left:49.10px;top:328.00px;font-size:6.6px;transform:scaleX(0.943);transform-origin:0 0;color:#141414">436.825000</div>
<div class="t" style="left:100.55px;top:328.00px;font-size:6.6px;transform:scaleX(0.993);transform-origin:0 0;color:#141414">D032N</div>
<div class="t" style="left:139.65px;top:328.00px;font-size:6.6px;transform:scaleX(0.943);transform-origin:0 0;color:#141414">436.825000</div>
<div class="t" style="left:191.35px;top:328.00px;font-size:6.6px;transform:scaleX(0.993);transform-origin:0 0;color:#141414">D032N</div>
<div class="t" style="left:236.95px;top:328.00px;font-size:6.6px;transform:scaleX(0.996);transform-origin:0 0;color:#141414">No</div>
<div class="t" style="left:268.40px;top:328.00px;font-size:6.6px;transform:scaleX(1.025);transform-origin:0 0;color:#141414">Hight</div>
<div class="t" style="left:299.20px;top:328.00px;font-size:6.6px;transform:scaleX(1.057);transform-origin:0 0;color:#141414">Wide</div>
<div class="t" style="left:332.90px;top:328.00px;font-size:6.6px;transform:scaleX(0.909);transform-origin:0 0;color:#141414">OFF</div>
<div class="t" style="left:370.00px;top:328.00px;font-size:6.6px;transform:scaleX(0.996);transform-origin:0 0;color:#141414">No</div>
<div class="t" style="left:405.25px;top:328.00px;font-size:6.6px;transform:scaleX(0.996);transform-origin:0 0;color:#141414">No</div>
<div class="t" style="left:438.70px;top:328.00px;font-size:6.6px;transform:scaleX(0.909);transform-origin:0 0;color:#141414">OFF</div>
<div class="t" style="left:29.80px;top:339.00px;font-size:6.6px;transform:scaleX(0.939);transform-origin:0 0;color:#141414">14</div>
<div class="t" style="left:49.10px;top:339.00px;font-size:6.6px;transform:scaleX(0.943);transform-origin:0 0;color:#141414">438.825000</div>
<div class="t" style="left:100.55px;top:339.00px;font-size:6.6px;transform:scaleX(0.993);transform-origin:0 0;color:#141414">D032N</div>
<div class="t" style="left:139.65px;top:339.00px;font-size:6.6px;transform:scaleX(0.943);transform-origin:0 0;color:#141414">438.825000</div>
<div class="t" style="left:191.35px;top:339.00px;font-size:6.6px;transform:scaleX(0.993);transform-origin:0 0;color:#141414">D032N</div>
<div class="t" style="left:236.95px;top:339.00px;font-size:6.6px;transform:scaleX(0.996);transform-origin:0 0;color:#141414">No</div>
<div class="t" style="left:268.40px;top:339.00px;font-size:6.6px;transform:scaleX(1.025);transform-origin:0 0;color:#141414">Hight</div>
<div class="t" style="left:299.20px;top:339.00px;font-size:6.6px;transform:scaleX(1.057);transform-origin:0 0;color:#141414">Wide</div>
<div class="t" style="left:332.90px;top:339.00px;font-size:6.6px;transform:scaleX(0.909);transform-origin:0 0;color:#141414">OFF</div>
<div class="t" style="left:370.00px;top:339.00px;font-size:6.6px;transform:scaleX(0.996);transform-origin:0 0;color:#141414">No</div>
<div class="t" style="left:405.25px;top:339.00px;font-size:6.6px;transform:scaleX(0.996);transform-origin:0 0;color:#141414">No</div>
<div class="t" style="left:438.70px;top:339.00px;font-size:6.6px;transform:scaleX(0.909);transform-origin:0 0;color:#141414">OFF</div>
<div class="t" style="left:29.80px;top:349.00px;font-size:6.6px;transform:scaleX(0.939);transform-origin:0 0;color:#141414">15</div>
<div class="t" style="left:49.10px;top:349.00px;font-size:6.6px;transform:scaleX(0.943);transform-origin:0 0;color:#141414">439.825000</div>
<div class="t" style="left:100.55px;top:349.00px;font-size:6.6px;transform:scaleX(0.993);transform-origin:0 0;color:#141414">D032N</div>
<div class="t" style="left:139.65px;top:349.00px;font-size:6.6px;transform:scaleX(0.943);transform-origin:0 0;color:#141414">439.825000</div>
<div class="t" style="left:191.35px;top:349.00px;font-size:6.6px;transform:scaleX(0.993);transform-origin:0 0;color:#141414">D032N</div>
<div class="t" style="left:236.95px;top:349.00px;font-size:6.6px;transform:scaleX(0.996);transform-origin:0 0;color:#141414">No</div>
<div class="t" style="left:268.40px;top:349.00px;font-size:6.6px;transform:scaleX(1.025);transform-origin:0 0;color:#141414">Hight</div>
<div class="t" style="left:299.20px;top:349.00px;font-size:6.6px;transform:scaleX(1.057);transform-origin:0 0;color:#141414">Wide</div>
<div class="t" style="left:332.90px;top:349.00px;font-size:6.6px;transform:scaleX(0.909);transform-origin:0 0;color:#141414">OFF</div>
<div class="t" style="left:370.00px;top:349.00px;font-size:6.6px;transform:scaleX(0.996);transform-origin:0 0;color:#141414">No</div>
<div class="t" style="left:405.25px;top:349.00px;font-size:6.6px;transform:scaleX(0.996);transform-origin:0 0;color:#141414">No</div>
<div class="t" style="left:438.70px;top:349.00px;font-size:6.6px;transform:scaleX(0.909);transform-origin:0 0;color:#141414">OFF</div>
<div class="t" style="left:29.80px;top:360.00px;font-size:6.6px;transform:scaleX(0.939);transform-origin:0 0;color:#141414">16</div>
<div class="t" style="left:49.10px;top:360.00px;font-size:6.6px;transform:scaleX(0.943);transform-origin:0 0;color:#141414">439.975000</div>
<div class="t" style="left:100.55px;top:360.00px;font-size:6.6px;transform:scaleX(0.993);transform-origin:0 0;color:#141414">D036N</div>
<div class="t" style="left:139.65px;top:360.00px;font-size:6.6px;transform:scaleX(0.943);transform-origin:0 0;color:#141414">439.975000</div>
<div class="t" style="left:191.35px;top:360.00px;font-size:6.6px;transform:scaleX(0.993);transform-origin:0 0;color:#141414">D036N</div>
<div class="t" style="left:236.95px;top:360.00px;font-size:6.6px;transform:scaleX(0.996);transform-origin:0 0;color:#141414">No</div>
<div class="t" style="left:268.40px;top:360.00px;font-size:6.6px;transform:scaleX(1.025);transform-origin:0 0;color:#141414">Hight</div>
<div class="t" style="left:299.20px;top:360.00px;font-size:6.6px;transform:scaleX(1.057);transform-origin:0 0;color:#141414">Wide</div>
<div class="t" style="left:332.90px;top:360.00px;font-size:6.6px;transform:scaleX(0.909);transform-origin:0 0;color:#141414">OFF</div>
<div class="t" style="left:370.00px;top:360.00px;font-size:6.6px;transform:scaleX(0.996);transform-origin:0 0;color:#141414">No</div>
<div class="t" style="left:405.25px;top:360.00px;font-size:6.6px;transform:scaleX(0.996);transform-origin:0 0;color:#141414">No</div>
<div class="t" style="left:438.70px;top:360.00px;font-size:6.6px;transform:scaleX(0.909);transform-origin:0 0;color:#141414">OFF</div>
<div class="a" style="left:427.7px;top:323.4px;width:18.8px;height:12.2px;background:#fcfcfc;border:0.7px solid #8f8f8f;border-radius:1.6px;box-shadow:1px 1px 1.4px rgba(0,0,0,.4)"></div>
<div class="t" style="left:431.00px;top:327.00px;font-size:7.4px;transform:scaleX(0.818);transform-origin:0 0;color:#6a6a6a">OFF</div>
<div class="a" style="left:4.6px;top:445.5px;width:630.4px;height:12.5px;background:#f0f0f0;border-top:0.8px solid #d0d0d0"></div>
<div class="a" style="left:4.6px;top:445.2px;width:26.5px;height:1px;background:#c4c4c4"></div>
<div class="t" style="left:7.80px;top:450.00px;font-size:7.7px;transform:scaleX(0.912);transform-origin:0 0;color:#2a2a2a;-webkit-text-stroke:0.1px #2a2a2a">COM3</div>
<svg class="a" style="left:627px;top:450px" width="8" height="8" viewBox="0 0 8 8"><g fill="#b0b0b0"><rect x="5" y="1" width="1.2" height="1.2"/><rect x="3" y="3" width="1.2" height="1.2"/><rect x="5" y="3" width="1.2" height="1.2"/><rect x="1" y="5" width="1.2" height="1.2"/><rect x="3" y="5" width="1.2" height="1.2"/><rect x="5" y="5" width="1.2" height="1.2"/></g></svg>
<div class="a" style="left:0;top:457.8px;width:640px;height:6.2px;background:linear-gradient(#eef2fa 0,#bcd0e2 1.2px,#b6dcec 4.3px,#2d5565 4.6px,#2a5060 6.2px)"></div>
<div class="a" style="left:0;top:0;width:0.9px;height:464px;background:#6f8299"></div>
<svg class="a" style="left:505px;top:345px" width="110" height="110" viewBox="505 345 110 110"><g fill="none" stroke="#fff" stroke-opacity="0.26" stroke-linejoin="round"><path d="M528.5 352.3 Q558 349.6 587.5 352.3 Q591 362 598.4 368.6 Q596 380 597 393 Q598 424 558.6 447.4 Q519 424 520 393 Q521 380 518.6 368.6 Q526 362 528.5 352.3Z" stroke-width="2.2" fill="#fff" fill-opacity="0.05"/><path d="M532 358.6 Q558 356.6 584 358.6 Q587 366 592.4 371 Q590.6 381 591.4 393 Q592 419 558.6 440 Q525 419 525.6 393 Q526.4 381 524.6 371 Q530 366 532 358.6Z" stroke-width="1.3"/><path d="M537 393 A21 21 0 0 1 579 393" stroke-width="1.5"/><path d="M554.6 371.8 L552.5 358.6 M561.4 371.8 L563.5 358.6 M548.1 374.5 L539.7 358.8 M567.9 374.5 L576.3 358.8 M542.4 379 L528 366 M573.6 379 L588 366 M538.3 385.8 L525.8 381.2 M577.7 385.8 L590.2 381.2" stroke-width="1.3"/><path d="M525.6 387.6 H541.4 L553.8 406 L565.2 387.6 H591.4" stroke-width="3.6" stroke-opacity="0.3"/><path d="M574.4 394.4 L566 407.4" stroke-width="3.4" stroke-opacity="0.3"/></g></svg>
<div class="t" style="left:511.90px;top:416.00px;font-size:9.8px;transform:scaleX(1.032);transform-origin:0 0;color:#fff;text-shadow:1px 1px 0.4px #222,0.5px 0.5px 0 #333;-webkit-text-stroke:0.25px #fff">ЗАО "Вива-Телеком"</div>
<div class="t" style="left:523.75px;top:430.00px;font-size:10px;transform:scaleX(0.988);transform-origin:0 0;color:#fff;text-shadow:1px 1px 0.4px #222,0.5px 0.5px 0 #333;-webkit-text-stroke:0.2px #fff">viva-telecom.org</div>
</body></html>
